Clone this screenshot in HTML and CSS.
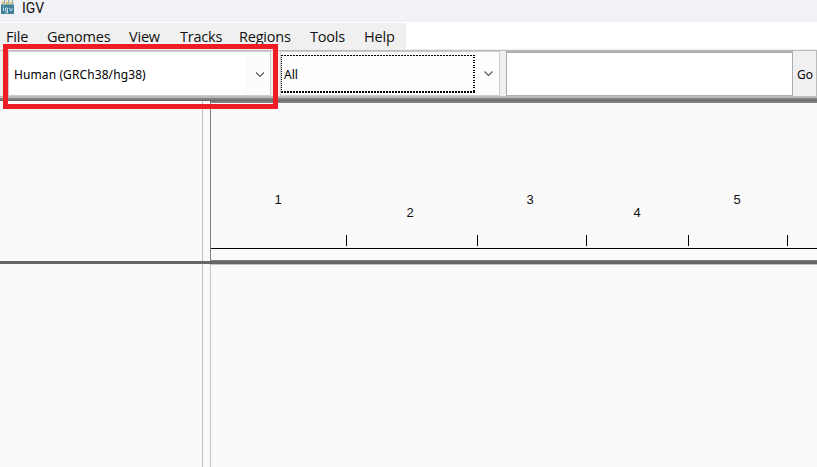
FILE: index.html
```html
<!DOCTYPE html>
<html lang="en">
<head>
<meta charset="utf-8">
<title>IGV</title>
<link rel="stylesheet" href="styles.css">
</head>
<body>
<div class="app">
  <header class="titlebar">
    <svg class="logo" width="13" height="14" viewBox="0 0 13 14">
      <rect width="13" height="14" fill="#3f819b"/>
      <rect width="13" height="5" fill="#e6e5dc"/>
      <path d="M1 2h2v2H1zM5 2h2v2H5zM9 2h2v2H9z" fill="#e0c063"/>
      <path d="M3 0h1v5H3zM7 0h1v5H7zM11 0h1v5h-1zM0 4h13v1H0z" fill="#8fb0b8"/>
      <path d="M2.500 6v1M2.500 8v3M6.500 8h-2v3h2zM6.500 8v5h-2M8.500 8l1.500 3 1.500-3" fill="none" stroke="#b9d8e2" stroke-width="1"/>
    </svg>
    <span>IGV</span>
  </header>
  <div class="menurow">
    <nav class="menu"><span>File</span><span>Genomes</span><span>View</span><span>Tracks</span><span>Regions</span><span>Tools</span><span>Help</span></nav>
  </div>
  <div class="toolbar">
    <div class="combo genome">
      <span>Human (GRCh38/hg38)</span>
      <svg width="10" height="6" viewBox="0 0 10 6"><path d="M1 .5l4 4 4-4" fill="none" stroke="#555" stroke-width="1.100"/></svg>
    </div>
    <div class="combo chrom">
      <div class="focus">All</div>
      <svg width="10" height="6" viewBox="0 0 10 6"><path d="M.5 .5l4 4 4-4" fill="none" stroke="#555" stroke-width="1.100"/></svg>
    </div>
    <div class="search"></div>
    <div class="go">Go</div>
  </div>
  <div class="toolbar-edge"></div>
  <main class="panels">
    <div class="names"></div>
    <div class="gap"></div>
    <svg class="ruler" width="607" height="163" viewBox="210 98 607 163">
      <path d="M210 98h607v5H210z" fill="#808080"/>
      <path d="M210 100h607v1H210z" fill="#666"/>
      <path d="M210 101h1v159h-1zM210 260h607v1H210z" fill="#808080"/>
      <path d="M211 248h606v1H211zM346 235h1v11h-1zM477 235h1v11h-1zM586 235h1v11h-1zM688 235h1v11h-1zM787 235h1v11h-1z" fill="#000"/>
      <g class="labels"><text x="278" y="204">1</text><text x="410" y="217">2</text><text x="530" y="204">3</text><text x="637" y="217">4</text><text x="737" y="204">5</text></g>
    </svg>
  </main>
  <div class="splitter"></div>
  <section class="tracks">
    <div class="names"></div>
    <div class="gap"></div>
    <div class="data"></div>
  </section>
  <div class="highlight"></div>
</div>
</body>
</html>
```
FILE: styles.css
```css
* { box-sizing: border-box; }
body { margin: 0; background: #fafafa; color: #111; }
.app {
  position: relative;
  width: 817px;
  height: 467px;
  overflow: hidden;
  display: flex;
  flex-direction: column;
}
.titlebar {
  height: 22px;
  flex: none;
  background: #f0f2f8;
  display: flex;
  padding-left: 1px;
  gap: 8px;
  font: 14px/17px Roboto, sans-serif;
}
.menurow {
  height: 29px;
  flex: none;
  background: #fff;
  padding-top: 1px;
  border-bottom: 1px solid #bcbcbc;
  box-shadow: inset 0 -1px #efefef;
}
.menu {
  width: 406px;
  height: 27px;
  background: #f0f0f0;
  padding-left: 6px;
  display: grid;
  grid-template-columns: 41px 82px 51px 59px 71px 54px 42px;
  font: 14.5px/27px "Open Sans", sans-serif;
  letter-spacing: -0.2px;
}
.toolbar {
  height: 47px;
  flex: none;
  display: flex;
  align-items: flex-start;
  background: #f0f0f0;
  border-bottom: 2px solid #bcbcbc;
  padding-left: 8px;
  font: 12px/15px "Noto Sans", sans-serif;
  color: #000;
}
.combo {
  height: 45px;
  display: flex;
  align-items: center;
  justify-content: space-between;
  background: #fdfdfd;
  border: 1px solid #ccc;
}
.genome {
  width: 263px;
  margin-right: 9px;
  padding: 2px 5px 0;
  background: linear-gradient(90deg, #fff 237px, #fcfcfc 237px);
  letter-spacing: 0.1px;
}
.chrom { width: 220px; margin-right: 6px; padding-right: 5px; }
.focus {
  width: 194px;
  height: 38px;
  padding: 12px 0 0 3px;
  background:
    repeating-linear-gradient(90deg, #000 0 2px, transparent 2px 3px) top / 100% 1px no-repeat,
    repeating-linear-gradient(90deg, #000 0 2px, transparent 2px 3px) bottom / 100% 2px no-repeat,
    repeating-linear-gradient(#000 0 1px, transparent 1px 2px) left / 1px 100% no-repeat,
    repeating-linear-gradient(#000 0 1px, transparent 1px 2px, #000 2px 3px, transparent 3px 5px) right / 2px 100% no-repeat;
}
.search {
  width: 287px;
  height: 45px;
  background: #fff;
  border: 1px solid #adacb1;
  border-top-width: 2px;
}
.go {
  width: 24px;
  height: 45px;
  padding-left: 4px;
  line-height: 47px;
  border-right: 1px solid #bcbcbc;
}
.toolbar-edge {
  height: 3px;
  flex: none;
  background: linear-gradient(#808080 2px, #666 2px);
}
.panels { height: 160px; flex: none; display: flex; }
.names { width: 203px; border-right: 1px solid #bfbfbf; }
.gap { width: 7px; }
.ruler { flex: none; margin-top: -3px; }
.labels { font: 13px "Liberation Sans", sans-serif; text-anchor: middle; fill: #111; }
.splitter { height: 3px; flex: none; background: #666; }
.tracks { flex: 1; display: flex; }
.data { flex: 1; border-left: 1px solid #c4c4c4; border-top: 1px solid #c4c4c4; }
.highlight {
  position: absolute;
  left: 3px;
  top: 44px;
  width: 275px;
  height: 65px;
  border: 5px solid #ee1c25;
}
```
